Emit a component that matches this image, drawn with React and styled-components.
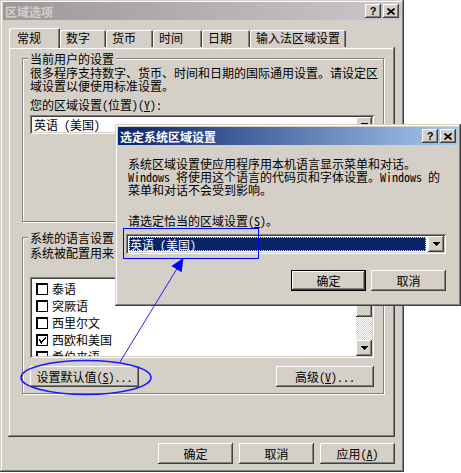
import React from 'react';
import styled, { createGlobalStyle, css } from 'styled-components';

const FONT = '"Noto Sans Mono CJK SC", "Noto Sans CJK SC", "Noto Sans", sans-serif';
const FACE = '#d4d0c8';

const Global = createGlobalStyle`
  html, body { margin: 0; padding: 0; background: #fff; }
  body { font-family: ${FONT}; font-size: 12px; line-height: 13px; color: #000; }
  * { box-sizing: border-box; }
`;

const raised = css`
  box-shadow: inset -1px -1px #404040, inset 1px 1px #fff, inset -2px -2px #808080, inset 2px 2px ${FACE};
`;
const sunken = css`
  box-shadow: inset 1px 1px #808080, inset -1px -1px #fff, inset 2px 2px #404040, inset -2px -2px ${FACE};
`;
const frame = css`
  box-shadow: inset -1px -1px #404040, inset 1px 1px ${FACE}, inset -2px -2px #808080, inset 2px 2px #fff;
`;

const Stage = styled.div`
  position: relative;
  width: 461px;
  height: 473px;
  overflow: hidden;
`;

const Window = styled.div`
  width: 404px;
  height: 472px;
  background: ${FACE};
  padding: 2px 3px 3px 3px;
  display: flex;
  flex-direction: column;
  ${frame}
`;

const Dialog = styled.div`
  position: absolute;
  left: 115px;
  top: 124px;
  width: 346px;
  height: 182px;
  background: ${FACE};
  padding: 3px;
  display: flex;
  flex-direction: column;
  z-index: 2;
  ${frame}
`;

const TitleBar = styled.div`
  height: 18px;
  flex: none;
  display: flex;
  align-items: center;
  justify-content: space-between;
  padding: 0 2px 0 2px;
  background: ${p => p.$active
    ? 'linear-gradient(to right, #0a246a, #a6caf0)'
    : 'linear-gradient(to right, #9c989c, #cac7ca)'};
`;

const TitleText = styled.span`
  font-weight: bold;
  font-size: 12px;
  color: ${p => p.$active ? '#fff' : FACE};
  white-space: nowrap;
`;

const TitleButtons = styled.div`
  display: flex;
  gap: 2px;
`;

const TitleButton = styled.div`
  width: 16px;
  height: 14px;
  background: ${FACE};
  display: flex;
  align-items: center;
  justify-content: center;
  font-family: "Liberation Sans", sans-serif;
  font-weight: bold;
  font-size: 11px;
  line-height: 14px;
  color: #000;
  ${raised}
`;

const Content = styled.div`
  flex: 1;
  display: flex;
  flex-direction: column;
  padding: 8px 6px 0 5px;
`;

const TabStrip = styled.div`
  display: flex;
  align-items: flex-end;
  height: 19px;
  padding-left: 1px;
  position: relative;
  z-index: 1;
`;

const Tab = styled.div`
  width: ${p => p.$w}px;
  height: ${p => p.$active ? 20 : 17}px;
  margin-bottom: ${p => p.$active ? -1 : 0}px;
  padding: ${p => p.$active ? '3px 0 0 8px' : '1px 0 0 6px'};
  background: ${FACE};
  white-space: nowrap;
  border-radius: 2px 2px 0 0;
  box-shadow: inset 1px 1px #fff, inset -1px 0 #404040, inset -2px 0 #808080;
`;

const Panel = styled.div`
  height: 390px;
  flex: none;
  padding: 5px 11px 0 14px;
  display: flex;
  flex-direction: column;
  ${frame}
`;

const Group = styled.fieldset`
  margin: ${p => p.$gap || 0}px 0 0 0;
  padding: ${p => p.$pt}px 9px ${p => p.$pb}px 7px;
  border: 1px solid #808080;
  box-shadow: inset 1px 1px #fff, 1px 1px #fff;
  min-inline-size: 0;
`;

const Legend = styled.legend`
  margin-left: -2px;
  padding: 0 2px;
  line-height: 13px;
  background: ${FACE};
  white-space: nowrap;
`;

const Text = styled.div`
  margin-top: ${p => p.$mt || 0}px;
  line-height: 13px;
  white-space: nowrap;
`;

const Combo = styled.div`
  margin-top: ${p => p.$mt || 0}px;
  margin-left: ${p => p.$ml || 0}px;
  height: ${p => p.$h || 19}px;
  background: #fff;
  padding: 2px;
  display: flex;
  align-items: stretch;
  ${sunken}
`;

const ComboValue = styled.div`
  flex: 1;
  display: flex;
  align-items: center;
  padding-left: ${p => p.$selected ? 1 : 2}px;
  margin: ${p => p.$selected ? '1px 2px 1px 1px' : 0};
  background: ${p => p.$selected ? '#0a246a' : 'transparent'};
  color: ${p => p.$selected ? '#fff' : '#000'};
  outline: ${p => p.$selected ? '1px dotted #f4e48c' : 'none'};
  outline-offset: -1px;
  white-space: nowrap;
`;

const ArrowButton = styled.div`
  width: 16px;
  flex: none;
  background: ${FACE};
  display: flex;
  align-items: center;
  justify-content: center;
  ${raised}
`;

const Row = styled.div`
  display: flex;
  justify-content: ${p => p.$justify || 'space-between'};
  gap: ${p => p.$gap || 0}px;
  margin-top: ${p => p.$mt || 0}px;
`;

const Button = styled.div`
  width: ${p => p.$w || 75}px;
  height: 21px;
  background: ${FACE};
  display: flex;
  align-items: center;
  justify-content: center;
  white-space: nowrap;
  ${p => p.$default ? css`
    box-shadow: inset 0 0 0 1px #000, inset -2px -2px #404040, inset 2px 2px #fff, inset -3px -3px #808080;
  ` : raised}
  u { text-decoration: underline; text-underline-offset: 1px; }
`;

const ListBox = styled.div`
  margin-top: ${p => p.$mt || 0}px;
  height: 81px;
  background: #fff;
  padding: 2px;
  display: flex;
  ${sunken}
`;

const Items = styled.div`
  flex: 1;
  padding: 1px 0 0 4px;
  overflow: hidden;
`;

const Item = styled.div`
  height: 17px;
  flex: none;
  display: flex;
  align-items: center;
  gap: 4px;
  white-space: nowrap;
`;

const Check = styled.div`
  width: 12px;
  height: 12px;
  flex: none;
  background: #fff;
  border: 1px solid #000;
  box-shadow: inset 1px 1px #000;
  display: flex;
  align-items: center;
  justify-content: center;
  padding: 1px 0 0 1px;
`;

const ScrollBar = styled.div`
  width: 16px;
  flex: none;
  display: flex;
  flex-direction: column;
`;

const ScrollButton = styled.div`
  height: ${p => p.$h || 16}px;
  flex: none;
  background: ${FACE};
  display: flex;
  align-items: center;
  justify-content: center;
  ${raised}
`;

const Track = styled.div`
  flex: 1;
  background: repeating-conic-gradient(#fff 0 25%, ${FACE} 0 50%) 0 0 / 2px 2px;
`;

const DialogBody = styled.div`
  flex: 1;
  padding: 12px 12px 0 10px;
  display: flex;
  flex-direction: column;
`;

const Overlay = styled.svg`
  position: absolute;
  left: 0;
  top: 0;
  z-index: 3;
  pointer-events: none;
`;

const DownArrow = () => (
  <svg width="7" height="4" viewBox="0 0 7 4" shapeRendering="crispEdges">
    <path d="M0 0h7v1H0zM1 1h5v1H1zM2 2h3v1H2zM3 3h1v1H3z" fill="#000" />
  </svg>
);

const CloseGlyph = () => (
  <svg width="8" height="7" viewBox="0 0 8 7">
    <path d="M0.5 0.5L7.5 6.5M7.5 0.5L0.5 6.5" stroke="#000" strokeWidth="1.7" />
  </svg>
);

const CheckMark = () => (
  <svg width="7" height="7" viewBox="0 0 7 7" shapeRendering="crispEdges">
    <path d="M6 0h1v1H6zM5 1h2v1H5zM0 2h1v1H0zM4 2h2v1H4zM0 3h2v1H0zM3 3h2v1H3zM1 4h3v1H1zM1 5h2v1H1zM2 6h1v1H2z" fill="#000" />
  </svg>
);

const tabs = [
  { label: '常规', w: 51, active: true },
  { label: '数字', w: 46 },
  { label: '货币', w: 47 },
  { label: '时间', w: 49 },
  { label: '日期', w: 48 },
  { label: '输入法区域设置', w: 96 },
];

const languages = [
  { label: '泰语' },
  { label: '突厥语' },
  { label: '西里尔文' },
  { label: '西欧和美国', checked: true },
  { label: '希伯来语' },
];

function TitleControls() {
  return (
    <TitleButtons>
      <TitleButton>?</TitleButton>
      <TitleButton><CloseGlyph /></TitleButton>
    </TitleButtons>
  );
}

export default function App() {
  return (
    <Stage>
      <Global />
      <Window>
        <TitleBar>
          <TitleText>区域选项</TitleText>
          <TitleControls />
        </TitleBar>
        <Content>
          <TabStrip>
            {tabs.map(t => (
              <Tab key={t.label} $w={t.w} $active={t.active}>{t.label}</Tab>
            ))}
          </TabStrip>
          <Panel>
            <Group $pt={1} $pb={87}>
              <Legend>当前用户的设置</Legend>
              <Text>很多程序支持数字、货币、时间和日期的国际通用设置。请设定区</Text>
              <Text>域设置以便使用标准设置。</Text>
              <Text $mt={6}>您的区域设置(位置)(<u>Y</u>):</Text>
              <Combo $mt={4}>
                <ComboValue>英语 (美国)</ComboValue>
                <ArrowButton><DownArrow /></ArrowButton>
              </Combo>
            </Group>
            <Group $gap={9} $pt={2} $pb={6}>
              <Legend>系统的语言设置</Legend>
              <Text>系统被配置用来读写多种语言的文档。</Text>
              <ListBox $mt={18}>
                <Items>
                  {languages.map(l => (
                    <Item key={l.label}>
                      <Check>{l.checked && <CheckMark />}</Check>
                      {l.label}
                    </Item>
                  ))}
                </Items>
                <ScrollBar>
                  <ScrollButton />
                  <ScrollButton $h={22} />
                  <Track />
                  <ScrollButton><DownArrow /></ScrollButton>
                </ScrollBar>
              </ListBox>
              <Row $mt={8}>
                <Button $w={109}>设置默认值(<u>S</u>)...</Button>
                <Button $w={98}>高级(<u>V</u>)...</Button>
              </Row>
            </Group>
          </Panel>
          <Row $justify="flex-end" $gap={6} $mt={6}>
            <Button>确定</Button>
            <Button>取消</Button>
            <Button>应用(<u>A</u>)</Button>
          </Row>
        </Content>
      </Window>

      <Dialog>
        <TitleBar $active>
          <TitleText $active>选定系统区域设置</TitleText>
          <TitleControls />
        </TitleBar>
        <DialogBody>
          <Text>系统区域设置使应用程序用本机语言显示菜单和对话。</Text>
          <Text>Windows 将使用这个语言的代码页和字体设置。Windows 的</Text>
          <Text>菜单和对话不会受到影响。</Text>
          <Text $mt={18}>请选定恰当的区域设置(<u>S</u>)。</Text>
          <Combo $mt={7} $ml={-2} $h={20}>
            <ComboValue $selected>英语 (美国)</ComboValue>
            <ArrowButton><DownArrow /></ArrowButton>
          </Combo>
          <Row $justify="flex-end" $gap={5} $mt={16}>
            <Button $default>确定</Button>
            <Button>取消</Button>
          </Row>
        </DialogBody>
      </Dialog>

      <Overlay width="461" height="473" viewBox="0 0 461 473">
        <rect x="123.5" y="228.5" width="135" height="30" fill="none" stroke="#0000ff" strokeWidth="1" />
        <ellipse cx="86" cy="377.5" rx="65" ry="17" fill="none" stroke="#1a1aff" strokeWidth="1.6" />
        <line x1="120" y1="362" x2="178" y2="267" stroke="#2020ff" strokeWidth="1" />
        <polygon points="183.5,258 181.6,272.2 171.4,266" fill="#0000ff" />
      </Overlay>
    </Stage>
  );
}
